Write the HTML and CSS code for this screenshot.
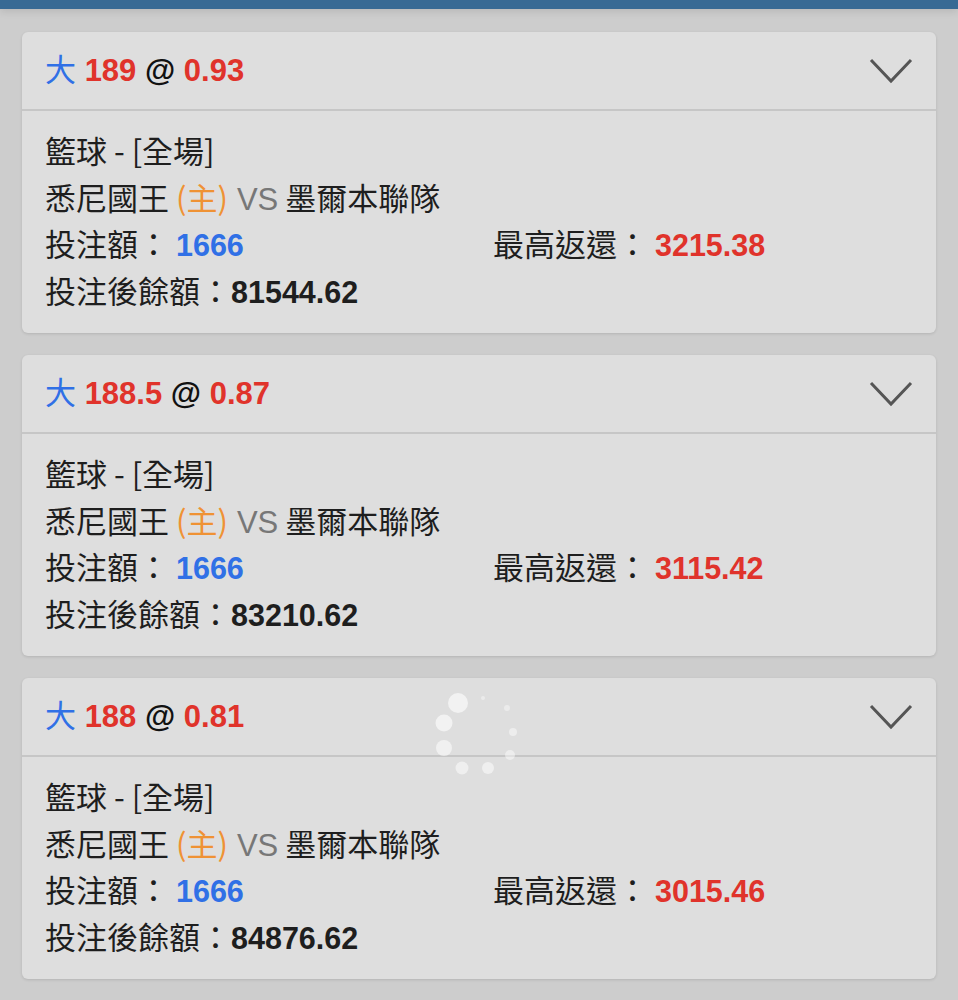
FILE: index.html
```html
<!DOCTYPE html>
<html lang="zh-Hant">
<head>
    <meta charset="UTF-8">
    <meta name="viewport" content="width=device-width, initial-scale=1.0">
    <title>投注單</title>
    <link rel="stylesheet" href="styles.css">
</head>
<body>
    <div class="topbar"></div>

    <div class="lista">
        <!-- Apuesta 1 -->
        <div class="tarjeta">
            <div class="cabecera">
                <div class="titulo"><span class="azul">大</span> <span class="rojo">189</span> @ <span class="rojo">0.93</span></div>
                <svg class="flecha" width="44" height="28" viewBox="0 0 44 28"><polyline points="2,3 22,24 42,3" fill="none" stroke="#555" stroke-width="3"/></svg>
            </div>
            <div class="cuerpo">
                <div class="linea">籃球 - [全場]</div>
                <div class="linea">悉尼國王 <span class="naranja">(主)</span> <span class="gris">VS</span> 墨爾本聯隊</div>
                <div class="fila">
                    <div class="linea">投注額： <b class="azul">1666</b></div>
                    <div class="linea">最高返還： <b class="rojo">3215.38</b></div>
                </div>
                <div class="linea">投注後餘額：<b>81544.62</b></div>
            </div>
        </div>

        <!-- Apuesta 2 -->
        <div class="tarjeta">
            <div class="cabecera">
                <div class="titulo"><span class="azul">大</span> <span class="rojo">188.5</span> @ <span class="rojo">0.87</span></div>
                <svg class="flecha" width="44" height="28" viewBox="0 0 44 28"><polyline points="2,3 22,24 42,3" fill="none" stroke="#555" stroke-width="3"/></svg>
            </div>
            <div class="cuerpo">
                <div class="linea">籃球 - [全場]</div>
                <div class="linea">悉尼國王 <span class="naranja">(主)</span> <span class="gris">VS</span> 墨爾本聯隊</div>
                <div class="fila">
                    <div class="linea">投注額： <b class="azul">1666</b></div>
                    <div class="linea">最高返還： <b class="rojo">3115.42</b></div>
                </div>
                <div class="linea">投注後餘額：<b>83210.62</b></div>
            </div>
        </div>

        <!-- Apuesta 3 -->
        <div class="tarjeta">
            <div class="cabecera">
                <div class="titulo"><span class="azul">大</span> <span class="rojo">188</span> @ <span class="rojo">0.81</span></div>
                <svg class="flecha" width="44" height="28" viewBox="0 0 44 28"><polyline points="2,3 22,24 42,3" fill="none" stroke="#555" stroke-width="3"/></svg>
            </div>
            <div class="cuerpo">
                <div class="linea">籃球 - [全場]</div>
                <div class="linea">悉尼國王 <span class="naranja">(主)</span> <span class="gris">VS</span> 墨爾本聯隊</div>
                <div class="fila">
                    <div class="linea">投注額： <b class="azul">1666</b></div>
                    <div class="linea">最高返還： <b class="rojo">3015.46</b></div>
                </div>
                <div class="linea">投注後餘額：<b>84876.62</b></div>
            </div>
        </div>
    </div>

    <!-- Indicador de carga -->
    <svg class="cargando" width="100" height="100" viewBox="0 0 100 100">
        <g fill="#fff">
            <circle cx="31" cy="19" r="10" opacity="0.6"/>
            <circle cx="17" cy="39" r="8.5" opacity="0.6"/>
            <circle cx="17" cy="64" r="8" opacity="0.55"/>
            <circle cx="35" cy="84" r="6.5" opacity="0.5"/>
            <circle cx="61" cy="84" r="6" opacity="0.5"/>
            <circle cx="83" cy="71" r="5" opacity="0.45"/>
            <circle cx="86" cy="48" r="4" opacity="0.45"/>
            <circle cx="80" cy="24" r="3" opacity="0.4"/>
            <circle cx="56" cy="14" r="2" opacity="0.4"/>
        </g>
    </svg>
</body>
</html>
```

FILE: styles.css
```css
body {
    margin: 0;
    background-color: #cdcdcd;
    font-family: "Noto Sans CJK TC", "Liberation Sans", sans-serif;
    color: #1e1e1e;
}

.topbar {
    height: 9px;
    background-color: #386a94;
    box-shadow: 0 2px 8px rgba(0, 0, 0, 0.12);
}

.lista {
    padding: 23px 22px 20px 22px;
    display: flex;
    flex-direction: column;
    gap: 22px;
}

.tarjeta {
    background-color: #dedede;
    border-radius: 6px;
    box-shadow: 0 1px 3px rgba(0, 0, 0, 0.12);
}

.cabecera {
    height: 77px;
    display: flex;
    align-items: center;
    justify-content: space-between;
    padding: 0 23px;
    border-bottom: 2px solid #c6c6c6;
}

.titulo {
    font-family: "Liberation Sans", "Noto Sans CJK TC", sans-serif;
    font-size: 31px;
    font-weight: bold;
    color: #111;
    margin-top: -6px;
}

.titulo .azul {
    font-family: "Noto Sans CJK TC", sans-serif;
    font-weight: normal;
}

.flecha {
    margin-top: 0;
}

.cuerpo {
    padding: 16px 23px 20px 23px;
}

.linea {
    height: 46.5px;
    line-height: 46.5px;
    font-size: 31px;
    white-space: nowrap;
}

.linea b {
    font-family: "Liberation Sans", sans-serif;
    font-size: 30.5px;
}

.fila {
    display: grid;
    grid-template-columns: 448px 1fr;
}

.azul { color: #3070e6; }
.rojo { color: #e0332b; }
.naranja { color: #ef9234; }

.gris {
    color: #777;
    font-family: "Liberation Sans", sans-serif;
    padding-left: 2px;
}

.cargando {
    position: absolute;
    left: 427px;
    top: 684px;
}
```
